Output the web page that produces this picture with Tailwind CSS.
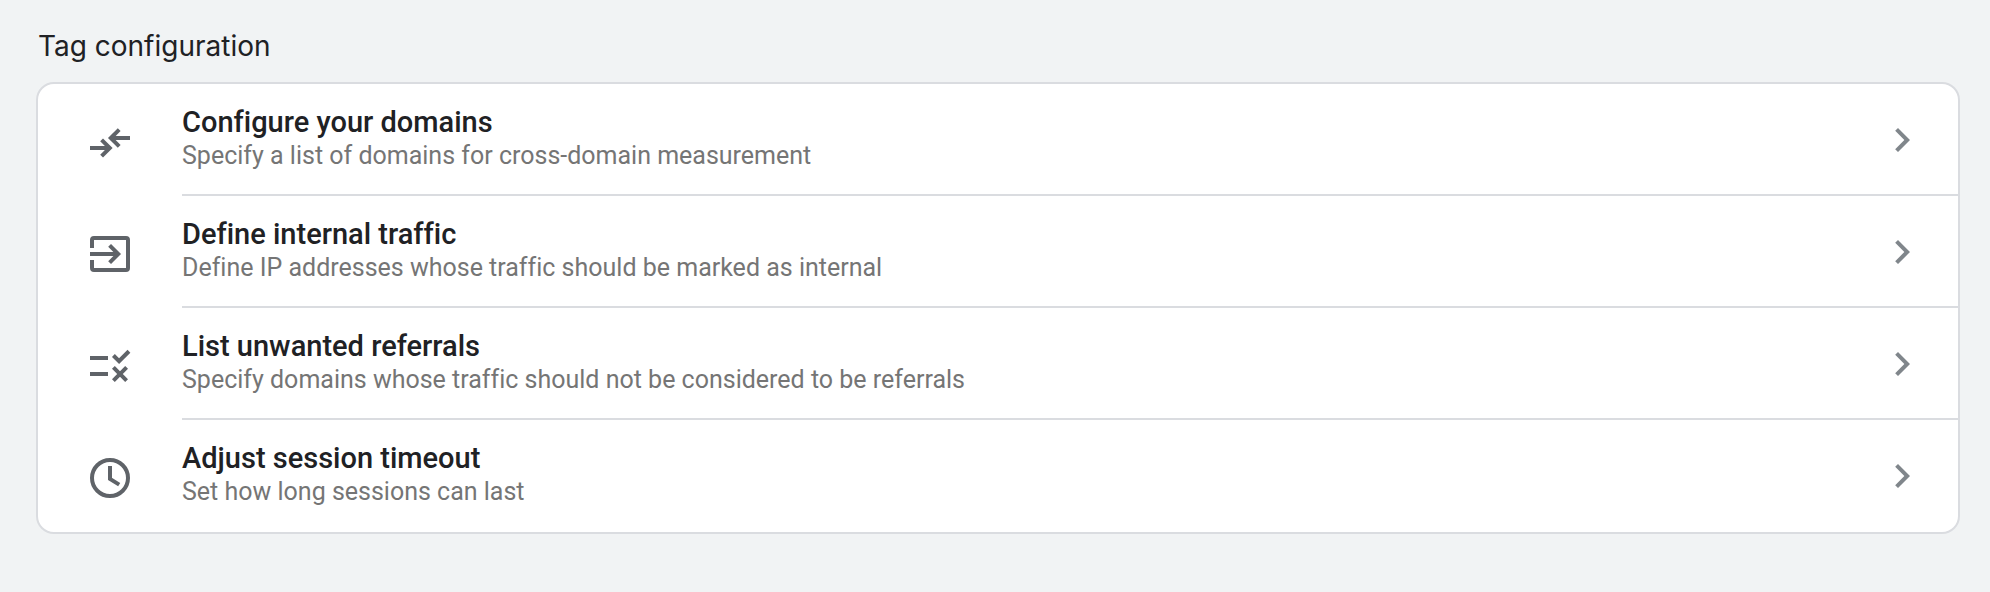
<!DOCTYPE html>
<html lang="en">
<head>
  <meta charset="UTF-8" />
  <meta name="viewport" content="width=device-width, initial-scale=1.0" />
  <title>Tag configuration</title>
  <script src="https://cdn.jsdelivr.net/npm/@tailwindcss/browser@4"></script>
</head>
<body class="min-h-screen bg-[#f1f3f4] font-['Roboto',sans-serif] text-[#202124] [font-variant-ligatures:none]">
  <main class="pt-[26px] pl-9 pr-[30px] pb-14">
    <h1 class="mb-4 pl-0.5 text-[28px] leading-10 font-['Inter',sans-serif]">Tag configuration</h1>

    <ul class="overflow-hidden rounded-[18px] border-2 border-[#dadce0] bg-white">
      <li>
        <a href="#domains" class="flex items-center gap-12 pl-12 hover:bg-gray-50">
          <svg class="mt-1 size-12 shrink-0 text-[#5f6368]" viewBox="0 0 24 24" fill="none" stroke="currentColor" stroke-width="2" aria-hidden="true">
            <path d="M2 15h9.8M7.8 10.9l4.1 4.1-4.1 4.1M22 10h-9.6M16.6 5.8L12.4 10l4.2 4.2" />
          </svg>
          <div class="flex grow items-center justify-between border-b-2 border-[#dadce0] pr-8">
            <div class="pt-5 pb-[22px]">
              <h2 class="text-[29px] leading-9 font-medium">Configure your domains</h2>
              <p class="text-[25px] leading-8 text-[#757575]">Specify a list of domains for cross-domain measurement</p>
            </div>
            <svg class="mt-0.5 size-12 shrink-0 text-[#80868b]" viewBox="0 0 24 24" fill="currentColor" aria-hidden="true">
              <path d="M10 6L8.59 7.41 13.17 12l-4.58 4.59L10 18l6-6z" />
            </svg>
          </div>
        </a>
      </li>

      <li>
        <a href="#internal-traffic" class="flex items-center gap-12 pl-12 hover:bg-gray-50">
          <svg class="mt-1 size-12 shrink-0 text-[#5f6368]" viewBox="0 0 24 24" fill="none" stroke="currentColor" stroke-width="2" aria-hidden="true">
            <path d="M3 9V5a1 1 0 0 1 1-1h16a1 1 0 0 1 1 1v14a1 1 0 0 1-1 1H4a1 1 0 0 1-1-1v-4M2 12h14M11.8 7.7l4.3 4.3-4.3 4.3" />
          </svg>
          <div class="flex grow items-center justify-between border-b-2 border-[#dadce0] pr-8">
            <div class="pt-5 pb-[22px]">
              <h2 class="text-[29px] leading-9 font-medium">Define internal traffic</h2>
              <p class="text-[25px] leading-8 text-[#757575]">Define IP addresses whose traffic should be marked as internal</p>
            </div>
            <svg class="mt-0.5 size-12 shrink-0 text-[#80868b]" viewBox="0 0 24 24" fill="currentColor" aria-hidden="true">
              <path d="M10 6L8.59 7.41 13.17 12l-4.58 4.59L10 18l6-6z" />
            </svg>
          </div>
        </a>
      </li>

      <li>
        <a href="#unwanted-referrals" class="flex items-center gap-12 pl-12 hover:bg-gray-50">
          <svg class="mt-1 size-12 shrink-0 text-[#5f6368]" viewBox="0 0 24 24" fill="currentColor" aria-hidden="true">
            <path d="M16.54 11L13 7.46l1.41-1.41 2.12 2.12 4.24-4.24 1.41 1.41L16.54 11zM11 7H2v2h9V7zm10 6.41L19.59 12 17 14.59 14.41 12 13 13.41 15.59 16 13 18.59 14.41 20 17 17.41 19.59 20 21 18.59 18.41 16 21 13.41zM11 15H2v2h9v-2z" />
          </svg>
          <div class="flex grow items-center justify-between border-b-2 border-[#dadce0] pr-8">
            <div class="pt-5 pb-[22px]">
              <h2 class="text-[29px] leading-9 font-medium">List unwanted referrals</h2>
              <p class="text-[25px] leading-8 text-[#757575]">Specify domains whose traffic should not be considered to be referrals</p>
            </div>
            <svg class="mt-0.5 size-12 shrink-0 text-[#80868b]" viewBox="0 0 24 24" fill="currentColor" aria-hidden="true">
              <path d="M10 6L8.59 7.41 13.17 12l-4.58 4.59L10 18l6-6z" />
            </svg>
          </div>
        </a>
      </li>

      <li>
        <a href="#session-timeout" class="flex items-center gap-12 pl-12 hover:bg-gray-50">
          <svg class="mt-1 size-12 shrink-0 text-[#5f6368]" viewBox="0 0 24 24" fill="none" stroke="currentColor" stroke-width="2" aria-hidden="true">
            <circle cx="12" cy="12" r="9" />
            <path d="M12 6v6.5l4.6 2.8" />
          </svg>
          <div class="flex grow items-center justify-between border-b-2 border-transparent pr-8">
            <div class="pt-5 pb-[22px]">
              <h2 class="text-[29px] leading-9 font-medium">Adjust session timeout</h2>
              <p class="text-[25px] leading-8 text-[#757575]">Set how long sessions can last</p>
            </div>
            <svg class="mt-0.5 size-12 shrink-0 text-[#80868b]" viewBox="0 0 24 24" fill="currentColor" aria-hidden="true">
              <path d="M10 6L8.59 7.41 13.17 12l-4.58 4.59L10 18l6-6z" />
            </svg>
          </div>
        </a>
      </li>
    </ul>
  </main>
</body>
</html>
